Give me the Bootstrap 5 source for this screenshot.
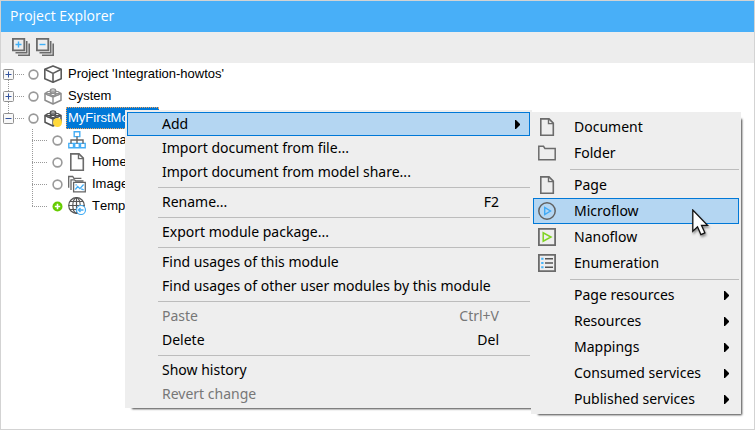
<!DOCTYPE html>
<html lang="en">
<head>
<meta charset="utf-8">
<meta name="viewport" content="width=device-width, initial-scale=1">
<title>Project Explorer</title>
<link href="https://cdn.jsdelivr.net/npm/bootstrap@5.3.0/dist/css/bootstrap.min.css" rel="stylesheet">
<style>
  body { font-family: "Noto Sans", "Open Sans", sans-serif; font-size: 14px; color: #000; }
  .explorer { border: 1px solid #d3d3d3; }
  .title-bar { background: #48aff8; color: #fff; height: 31px; padding: 0 9px 2px; font-family: "Open Sans", "Noto Sans", sans-serif; font-size: 14px; }
  .tool-bar { background: #ededed; height: 31px; padding: 0 11px 1px; gap: 6px; }
  .bare { border: 0; padding: 0; background: none; line-height: 0; }
  svg { display: block; flex: none; }

  .tree { font-family: "Liberation Sans", Arial, sans-serif; font-size: 13px; line-height: 22px; font-kerning: none; }
  .tree-row { height: 22px; }
  .expander { width: 11px; height: 11px; margin-left: 2px; position: relative; z-index: 1; }
  .dots { width: 9px; height: 1px; margin-left: 1px; background: repeating-linear-gradient(90deg, #999 0 1px, transparent 1px 2px); }
  .dots-long { width: 16px; margin-left: 31px; }
  .state { margin-left: 4px; margin-right: 5px; }
  .trunk { background: repeating-linear-gradient(#999 0 1px, transparent 1px 2px) 7px 11px / 1px 44px no-repeat; }
  .branch { background: repeating-linear-gradient(#999 0 1px, transparent 1px 2px) 31px 0 / 1px 77px no-repeat; }
  .node-label { margin-left: 4px; padding: 0 2px; white-space: nowrap; }
  .node-label.chosen { min-width: 93px; background: #0078d7; color: #fff; outline: 1px dotted #f5a55a; outline-offset: -1px; }

  .menu-panel { --bs-dropdown-font-size: 14px; padding: 2px; border: 0; border-radius: 0; background: #eee; color: #000; box-shadow: 4px 4px 2px -3px #444; }
  .context-menu { left: 124px; top: 109px; width: 407px; }
  .sub-menu { left: 100%; top: 0; margin-left: 1px; width: 210px; }
  .menu-panel .dropdown-item { display: flex; align-items: center; height: 24px; line-height: 22px; border: 1px solid transparent; padding: 0 9px 0 34px; color: #000; background: none; }
  .sub-menu .dropdown-item { height: 26px; padding-left: 4px; }
  .menu-panel .dropdown-item.picked { background: #b4d6f2; border-color: #0078d7; }
  .menu-panel .dropdown-item:disabled { color: #777; }
  .shortcut { padding-right: 21px; }
  .menu-icon { width: 18px; height: 18px; margin-right: 18px; flex: none; }
  .menu-panel .dropdown-divider { margin: 3px 0 2px 31px; border-top: 1px solid #bcbcbc; opacity: 1; }
  .sub-menu .dropdown-divider { margin-left: 37px; }
  .pointer { left: 691px; top: 208px; z-index: 1100; pointer-events: none; filter: drop-shadow(1px 2px 1px rgba(0,0,0,.4)); }
</style>
<script src="https://cdn.jsdelivr.net/npm/bootstrap@5.3.0/dist/js/bootstrap.bundle.min.js"></script>
</head>
<body>
<svg width="0" height="0" class="position-absolute" aria-hidden="true">
  <defs>
    <g id="i-circle"><circle cx="5.500" cy="5.500" r="4.400" fill="#fff" stroke="#999" stroke-width="1.600"/></g>
    <g id="i-page" fill="none" stroke="#6b6b6b" stroke-width="1.600"><path d="M2.800 .9h8.200l4.300 4.200v12.100H2.800z"/><path d="M10.500 1v4.600h4.600" stroke-width="1.400"/></g>
    <g id="i-brick" fill="none" stroke="currentColor" stroke-linejoin="round"><path d="M9 3 1 6.500v6.800L9 17l8-3.700V6.500z" stroke-width="1.500"/><path d="M1 6.500 9 10l8-3.500M9 10v7" stroke-width="1.400"/><g fill="#fff" stroke-width="1.200"><path d="M6.500 3v1.800c0 1.500 5 1.500 5 0V3"/><ellipse cx="9" cy="3" rx="2.500" ry="1.200"/><path d="M2.800 5.600v1.300c0 1.400 4 1.400 4 0V5.600M11.200 5.600v1.300c0 1.400 4 1.400 4 0V5.600"/><ellipse cx="4.800" cy="5.600" rx="2" ry="1.100"/><ellipse cx="13.200" cy="5.600" rx="2" ry="1.100"/><ellipse cx="9" cy="7.400" rx="2.200" ry="1.100"/></g></g>
    <g id="i-box"><rect x=".5" y=".5" width="10" height="10" rx="1" fill="#f8f8f8" stroke="#919191"/><path d="M2.500 5.500h6" stroke="#33539e"/></g>
    <g id="i-stack" fill="none" stroke="#6b6b6b"><path d="M.9.9h11.400v11.400H.9z" stroke-width="1.800"/><path d="M14.700 3v11.700H3.500M17.200 5.500v11.700H6" stroke-width="1.600"/></g>
    <path id="i-more" d="M0 0h1l4 4v1L1 9H0z"/>
  </defs>
</svg>

<main class="explorer position-relative d-flex flex-column min-vh-100 bg-white">
  <header class="title-bar d-flex align-items-center">Project Explorer</header>
  <div class="tool-bar d-flex align-items-center" role="toolbar" aria-label="Tree tools">
    <button class="bare" type="button" aria-label="Expand all"><svg width="18" height="18"><use href="#i-stack"/><path d="M3.500 6.500h6M6.500 3.500v6" stroke="#3fb0f8" stroke-width="1.400"/></svg></button>
    <button class="bare" type="button" aria-label="Collapse all"><svg width="18" height="18"><use href="#i-stack"/><path d="M3.500 6.500h6" stroke="#3fb0f8" stroke-width="1.400"/></svg></button>
  </div>

  <ul class="tree trunk list-unstyled mb-0 flex-grow-1" role="tree">
    <li role="treeitem" aria-expanded="false">
      <div class="tree-row d-flex align-items-center">
        <button class="bare expander" type="button" aria-label="Expand project"><svg width="11" height="11"><use href="#i-box"/><path d="M5.500 2.500v6" stroke="#33539e"/></svg></button>
        <span class="dots"></span><svg class="state" width="11" height="11"><use href="#i-circle"/></svg>
        <svg width="18" height="18" fill="none" stroke="#5c5c5c" stroke-width="1.600" stroke-linejoin="round"><path d="M9 .9 17.200 4.300v9.400L9 17.200.8 13.700V4.300z"/><path d="M.8 4.300 9 8.400l8.200-4.100M9 8.400v8.800"/></svg>
        <span class="node-label">Project 'Integration-howtos'</span>
      </div>
    </li>
    <li role="treeitem" aria-expanded="false">
      <div class="tree-row d-flex align-items-center">
        <button class="bare expander" type="button" aria-label="Expand System"><svg width="11" height="11"><use href="#i-box"/><path d="M5.500 2.500v6" stroke="#33539e"/></svg></button>
        <span class="dots"></span><svg class="state" width="11" height="11"><use href="#i-circle"/></svg>
        <svg width="18" height="18" color="#8c8c8c"><use href="#i-brick"/></svg>
        <span class="node-label">System</span>
      </div>
    </li>
    <li role="treeitem" aria-expanded="true">
      <div class="tree-row d-flex align-items-center">
        <button class="bare expander" type="button" aria-label="Collapse MyFirstModule"><svg width="11" height="11"><use href="#i-box"/></svg></button>
        <span class="dots"></span><svg class="state" width="11" height="11"><use href="#i-circle"/></svg>
        <svg width="18" height="18" color="#505050"><use href="#i-brick"/><circle cx="13.500" cy="13.500" r="4.500" fill="#ffd93b"/></svg>
        <span class="node-label chosen">MyFirstModule</span>
      </div>
      <ul class="branch list-unstyled" role="group">
        <li class="tree-row d-flex align-items-center" role="treeitem">
          <span class="dots dots-long"></span><svg class="state" width="11" height="11"><use href="#i-circle"/></svg>
          <svg width="18" height="18" fill="none" stroke="#45aef5" stroke-width="1.400"><path d="M6.200.8h5.600v4.800H6.200zM.8 12.400h4.700v4.400H.8zM6.700 12.400h4.600v4.400H6.700zM12.500 12.400h4.700v4.400h-4.700z"/><path d="M9 5.600v6.800M3 12.400V9h12v3.400" stroke="#666"/></svg>
          <span class="node-label">Domain Model</span>
        </li>
        <li class="tree-row d-flex align-items-center" role="treeitem">
          <span class="dots dots-long"></span><svg class="state" width="11" height="11"><use href="#i-circle"/></svg>
          <svg width="18" height="18"><use href="#i-page"/></svg>
          <span class="node-label">Home_Web</span>
        </li>
        <li class="tree-row d-flex align-items-center" role="treeitem">
          <span class="dots dots-long"></span><svg class="state" width="11" height="11"><use href="#i-circle"/></svg>
          <svg width="18" height="18" fill="none" stroke="#666" stroke-width="1.300"><path d="M.7 12.700V1.500h4l1.200 1.800h7.500M3 15V4.800h3.500L7.700 6h7.800"/><path d="M5.600 7.300h11.700v9.500H5.600z"/><path d="m7.300 14.500 2.400-3 2.200 2.100 3.700-4.100M7.500 9.800h1.300M13.200 13.800l2.500 1" stroke="#45aef5"/></svg>
          <span class="node-label">Images</span>
        </li>
        <li class="tree-row d-flex align-items-center" role="treeitem">
          <span class="dots dots-long"></span><svg class="state" width="11" height="11"><circle cx="5.500" cy="5.500" r="5" fill="#6c0"/><path d="M2.800 5.500h5.400M5.500 2.800v5.400" stroke="#fff" stroke-width="1.600"/></svg>
          <svg width="18" height="18" fill="none" stroke="#555" stroke-width="1.200"><circle cx="8.500" cy="8.500" r="7.800"/><ellipse cx="8.500" cy="8.500" rx="3.700" ry="7.800"/><path d="M8.500.7v15.600M.7 8.500h15.600M2 4.500h13M2 12.500h13"/><circle cx="13" cy="13" r="4.500" fill="#fff" stroke="#45aef5"/><path d="M15.500 13h-5M12.500 10.900 10.400 13l2.100 2.100" stroke="#45aef5" stroke-width="1.400"/></svg>
          <span class="node-label">Templates</span>
        </li>
      </ul>
    </li>
  </ul>

  <ul class="dropdown-menu menu-panel context-menu show">
    <li class="position-relative">
      <button class="dropdown-item picked" type="button" aria-haspopup="true" aria-expanded="true">Add <svg class="ms-auto" width="5" height="9"><use href="#i-more"/></svg></button>
      <ul class="dropdown-menu menu-panel sub-menu show">
        <li><button class="dropdown-item" type="button"><svg class="menu-icon"><use href="#i-page"/></svg>Document</button></li>
        <li><button class="dropdown-item" type="button"><svg class="menu-icon"><path d="M.8 15.700V2.300h4.700l1.400 2.100h10.300v11.300z" fill="none" stroke="#6b6b6b" stroke-width="1.500"/></svg>Folder</button></li>
        <li><hr class="dropdown-divider"></li>
        <li><button class="dropdown-item" type="button"><svg class="menu-icon"><use href="#i-page"/></svg>Page</button></li>
        <li><button class="dropdown-item picked" type="button"><svg class="menu-icon" fill="none"><circle cx="9" cy="9" r="8.200" stroke="#626262" stroke-width="1.500"/><path d="M6.700 5.500v7l5.800-3.500z" stroke="#3fa9f5" stroke-width="1.400"/></svg>Microflow</button></li>
        <li><button class="dropdown-item" type="button"><svg class="menu-icon" fill="none"><path d="M.9.9h16.200v16.200H.9z" stroke="#6b6b6b" stroke-width="1.800"/><path d="M5.200 4.800v8.400L13 9z" stroke="#7ed321" stroke-width="1.500"/></svg>Nanoflow</button></li>
        <li><button class="dropdown-item" type="button"><svg class="menu-icon" fill="none"><path d="M.9.9h16.200v16.200H.9z" stroke="#6b6b6b" stroke-width="1.800"/><path d="M7 4.800h8M7 9h8M7 13.200h8" stroke="#555" stroke-width="1.400"/><path d="M3.200 4.800h2.300M3.200 9h2.300M3.200 13.200h2.300" stroke="#45b4fa" stroke-width="2"/></svg>Enumeration</button></li>
        <li><hr class="dropdown-divider"></li>
        <li><button class="dropdown-item" type="button" aria-haspopup="true"><span class="menu-icon"></span>Page resources<svg class="ms-auto" width="5" height="9"><use href="#i-more"/></svg></button></li>
        <li><button class="dropdown-item" type="button" aria-haspopup="true"><span class="menu-icon"></span>Resources<svg class="ms-auto" width="5" height="9"><use href="#i-more"/></svg></button></li>
        <li><button class="dropdown-item" type="button" aria-haspopup="true"><span class="menu-icon"></span>Mappings<svg class="ms-auto" width="5" height="9"><use href="#i-more"/></svg></button></li>
        <li><button class="dropdown-item" type="button" aria-haspopup="true"><span class="menu-icon"></span>Consumed services<svg class="ms-auto" width="5" height="9"><use href="#i-more"/></svg></button></li>
        <li><button class="dropdown-item" type="button" aria-haspopup="true"><span class="menu-icon"></span>Published services<svg class="ms-auto" width="5" height="9"><use href="#i-more"/></svg></button></li>
      </ul>
    </li>
    <li><button class="dropdown-item" type="button">Import document from file...</button></li>
    <li><button class="dropdown-item" type="button">Import document from model share...</button></li>
    <li><hr class="dropdown-divider"></li>
    <li><button class="dropdown-item" type="button">Rename...<span class="shortcut ms-auto">F2</span></button></li>
    <li><hr class="dropdown-divider"></li>
    <li><button class="dropdown-item" type="button">Export module package...</button></li>
    <li><hr class="dropdown-divider"></li>
    <li><button class="dropdown-item" type="button">Find usages of this module</button></li>
    <li><button class="dropdown-item" type="button">Find usages of other user modules by this module</button></li>
    <li><hr class="dropdown-divider"></li>
    <li><button class="dropdown-item" type="button" disabled>Paste<span class="shortcut ms-auto">Ctrl+V</span></button></li>
    <li><button class="dropdown-item" type="button">Delete<span class="shortcut ms-auto">Del</span></button></li>
    <li><hr class="dropdown-divider"></li>
    <li><button class="dropdown-item" type="button">Show history</button></li>
    <li><button class="dropdown-item" type="button" disabled>Revert change</button></li>
  </ul>

  <svg class="pointer position-absolute" width="17" height="27" aria-hidden="true"><path d="M.8 1v21.200l4.700-4.400 3.400 7.800 4-1.800-3.400-7.500h6z" fill="#fff" stroke="#111" stroke-width="1.300"/></svg>
</main>
</body>
</html>
